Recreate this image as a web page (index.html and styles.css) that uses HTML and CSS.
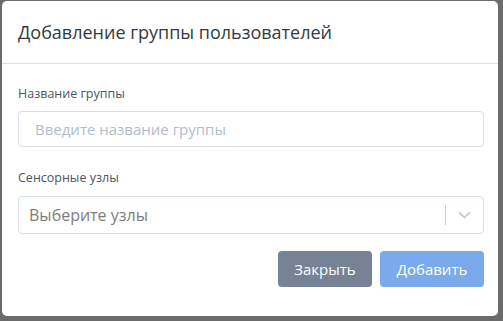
FILE: index.html
```html
<!DOCTYPE html>
<html lang="ru">
<head>
    <meta charset="UTF-8">
    <title>Добавление группы пользователей</title>
    <link rel="stylesheet" href="styles.css">
</head>
<body>
    <div class="modal">
        <div class="modal-header">
            <h1>Добавление группы пользователей</h1>
        </div>
        <div class="modal-body">
            <label class="field-label">Название группы</label>
            <div class="input">Введите название группы</div>
            <label class="field-label second">Сенсорные узлы</label>
            <div class="select">
                <span class="select-value">Выберите узлы</span>
                <span class="select-sep"></span>
                <span class="select-arrow">
                    <svg width="13" height="8" viewBox="0 0 13 8"><path d="M1 1.2l5.5 5.2 5.5-5.2" fill="none" stroke="#cccccc" stroke-width="2"/></svg>
                </span>
            </div>
            <div class="actions">
                <button class="btn btn-close">Закрыть</button>
                <button class="btn btn-add">Добавить</button>
            </div>
        </div>
    </div>
</body>
</html>
```

FILE: styles.css
```css
body {
    margin: 0;
    background-color: #6b6b6b;
    font-family: "Open Sans", "Noto Sans", sans-serif;
}
.modal {
    margin: 1px 5px 0 2px;
    width: 496px;
    height: 315px;
    background: #fff;
    border-radius: 5px;
}
.modal-header {
    height: 62px;
    padding: 0 16px;
    display: flex;
    align-items: center;
    border-bottom: 1px solid #dee2e6;
}
.modal-header h1 {
    margin: 0;
    font-size: 18px;
    font-weight: 400;
    color: #333a42;
}
.modal-body {
    padding: 20px 14px 0 16px;
}
.field-label {
    display: block;
    height: 20px;
    line-height: 20px;
    font-size: 12.5px;
    color: #4d5560;
    margin-bottom: 7px;
}
.field-label.second {
    margin-top: 21px;
    margin-bottom: 8px;
}
.input {
    height: 34px;
    border: 1px solid #d7dfe9;
    border-radius: 4px;
    padding: 0 16px;
    display: flex;
    align-items: center;
    font-size: 15px;
    color: #b3bccb;
}
.select {
    height: 36px;
    border: 1px solid #d7dfe9;
    border-radius: 4px;
    display: flex;
    align-items: center;
    padding-left: 10px;
}
.select-value {
    flex: 1;
    font-size: 16px;
    color: #7e7e7e;
}
.select-sep {
    width: 1px;
    height: 20px;
    background: #cccccc;
}
.select-arrow {
    width: 37px;
    display: flex;
    justify-content: center;
    align-items: center;
}
.actions {
    display: flex;
    justify-content: flex-end;
    gap: 8px;
    margin-top: 17px;
}
.btn {
    height: 36px;
    border: none;
    border-radius: 4px;
    color: #fff;
    font-family: inherit;
    font-size: 15px;
    padding: 0 16px;
}
.btn-close {
    width: 94px;
    background: #768396;
}
.btn-add {
    width: 104px;
    background: #7aaaeb;
}
```
